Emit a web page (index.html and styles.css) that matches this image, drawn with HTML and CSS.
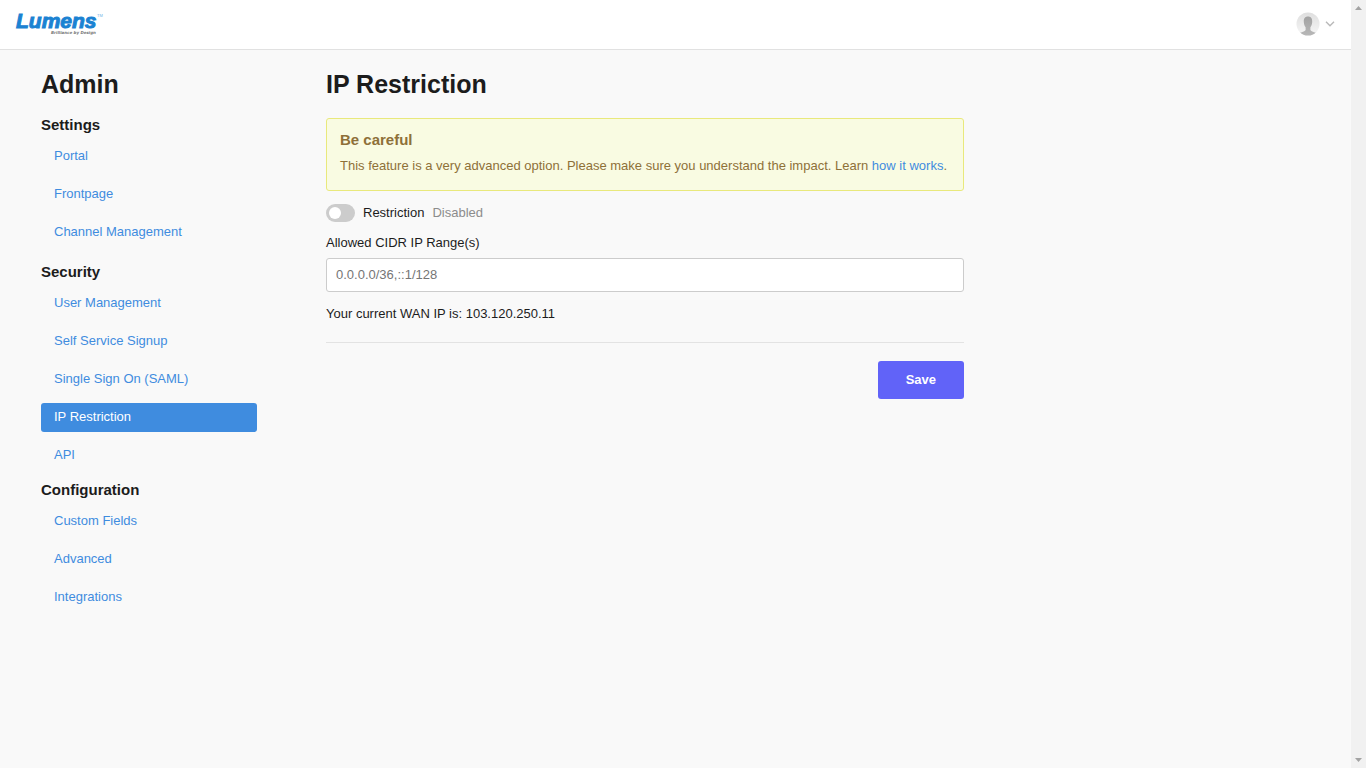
FILE: index.html
```html
<!DOCTYPE html>
<html lang="en">
<head>
<meta charset="utf-8">
<meta name="viewport" content="width=device-width, initial-scale=1">
<title>IP Restriction</title>
<link rel="stylesheet" href="styles.css">
</head>
<body>
<div class="page">
  <header class="topbar">
    <a class="logo" href="#" aria-label="Lumens">
      <svg class="logo-art" width="96" height="36" viewBox="0 0 96 36">
        <text class="logo-name" x="2" y="22">Lumens</text>
        <text class="logo-mark" x="83" y="11">TM</text>
        <text class="logo-tag" x="37" y="28">Brilliance by Design</text>
      </svg>
    </a>
    <button class="account" type="button" aria-label="Account menu">
      <svg class="avatar" width="24" height="24" viewBox="0 0 24 24">
        <defs>
          <linearGradient id="back" x1="0" y1="0" x2="0" y2="1"><stop offset="0" stop-color="#dedede"/><stop offset="1" stop-color="#f7f7f7"/></linearGradient>
          <linearGradient id="person" x1="0" y1="0" x2="0" y2="1"><stop offset="0" stop-color="#a2a2a2"/><stop offset="1" stop-color="#b8b8b8"/></linearGradient>
          <clipPath id="round"><circle cx="12" cy="12" r="11.5"/></clipPath>
        </defs>
        <g clip-path="url(#round)">
          <rect width="24" height="24" fill="url(#back)"/>
          <path fill="url(#person)" d="M12 4.6C8.9 4.6 7.6 6.8 7.8 10C7.9 12.3 8.6 14 9.6 15.2V18C8.8 19.6 5.5 19.8 3 21.8V24H21V21.6C18.5 19.8 15.2 19.8 14.4 18V15.2C15.4 14 16.1 12.3 16.2 10C16.4 6.8 15.1 4.6 12 4.6Z"/>
        </g>
      </svg>
      <svg class="chevron" width="10" height="6" viewBox="0 0 10 6"><path d="M1 .8L5 4.8L9 .8" fill="none" stroke="#b9b9b9" stroke-width="1.4"/></svg>
    </button>
  </header>

  <div class="content">
    <nav class="sidebar" aria-label="Admin">
      <h1 class="title">Admin</h1>
      <section class="group">
        <h2 class="group-title">Settings</h2>
        <a class="nav-link" href="#">Portal</a>
        <a class="nav-link" href="#">Frontpage</a>
        <a class="nav-link" href="#">Channel Management</a>
      </section>
      <section class="group group-security">
        <h2 class="group-title">Security</h2>
        <a class="nav-link" href="#">User Management</a>
        <a class="nav-link" href="#">Self Service Signup</a>
        <a class="nav-link" href="#">Single Sign On (SAML)</a>
        <a class="nav-link active" href="#" aria-current="page">IP Restriction</a>
        <a class="nav-link" href="#">API</a>
      </section>
      <section class="group">
        <h2 class="group-title">Configuration</h2>
        <a class="nav-link" href="#">Custom Fields</a>
        <a class="nav-link" href="#">Advanced</a>
        <a class="nav-link" href="#">Integrations</a>
      </section>
    </nav>

    <main class="main">
      <h1 class="title">IP Restriction</h1>
      <div class="notice">
        <h2 class="notice-title">Be careful</h2>
        <p class="notice-text">This feature is a very advanced option. Please make sure you understand the impact. Learn <a class="link" href="#">how it works</a>.</p>
      </div>
      <form class="form">
        <div class="switch-row">
          <input class="switch" type="checkbox" role="switch" id="restriction">
          <label for="restriction">Restriction</label>
          <span class="state">Disabled</span>
        </div>
        <label class="field-label" for="ranges">Allowed CIDR IP Range(s)</label>
        <input class="field" type="text" id="ranges" placeholder="0.0.0.0/36,::1/128">
        <p class="wan">Your current WAN IP is: 103.120.250.11</p>
        <div class="actions"><button class="save" type="button">Save</button></div>
      </form>
    </main>
  </div>
</div>
<div class="scrollbar" aria-hidden="true">
  <svg width="7" height="4" viewBox="0 0 7 4"><path d="M0 4L3.5 0L7 4Z"/></svg>
  <svg width="7" height="4" viewBox="0 0 7 4"><path d="M0 0L3.5 4L7 0Z"/></svg>
</div>
</body>
</html>
```
FILE: styles.css
```css
* {
  box-sizing: border-box;
}

body {
  display: grid;
  grid-template-columns: minmax(0, 1fr) 15px;
  min-height: 100vh;
  margin: 0;
  background: #f9f9f9;
  color: #1c1c1c;
  font: 13px/18px "Liberation Sans", Arial, sans-serif;
}

h1, h2, p {
  margin: 0;
}

a {
  color: #3f8cdf;
  text-decoration: none;
}

.topbar {
  display: flex;
  align-items: center;
  justify-content: space-between;
  height: 50px;
  padding: 0 16px 1px 14px;
  border-bottom: 1px solid #e1e1e1;
  background: #fff;
}

.logo-art {
  display: block;
  overflow: visible;
}

.logo-name {
  fill: #1b82d2;
  stroke: #1b82d2;
  stroke-width: 1px;
  font-size: 21px;
  font-style: italic;
  font-weight: bold;
}

.logo-mark {
  fill: #6fb2e4;
  font-size: 4px;
}

.logo-tag {
  fill: #777;
  font-family: "DejaVu Sans", sans-serif;
  font-size: 4px;
  font-style: italic;
  font-weight: bold;
}

.account {
  display: flex;
  align-items: center;
  gap: 5px;
  padding: 0;
  border: 0;
  background: none;
}

.content {
  display: flex;
  gap: 69px;
  padding: 16px 41px;
}

.sidebar {
  flex: 0 0 216px;
}

.title {
  margin-bottom: 16px;
  font-size: 25px;
  line-height: 36px;
}

.sidebar .title {
  margin-bottom: 14px;
}

.group {
  margin-bottom: 16px;
}

.group-security {
  margin-bottom: 11px;
}

.group-title, .notice-title {
  margin-bottom: 8px;
  font-size: 15px;
  line-height: 18px;
}

.nav-link {
  display: block;
  margin-bottom: 9px;
  padding: 5px 13px 6px;
  border-radius: 3px;
}

.active {
  background: #3f8cdf;
  color: #fff;
}

.main {
  flex: 1;
  max-width: 638px;
}

.notice {
  padding: 12px 13px 15px;
  border: 1px solid #e9e97c;
  border-radius: 3px;
  background: #f9fbe2;
  color: #8e7038;
}

.switch-row {
  display: flex;
  align-items: center;
  gap: 8px;
  margin: 13px 0 12px;
}

.switch {
  width: 29px;
  height: 18px;
  margin: 0;
  padding: 3px;
  border-radius: 9px;
  background: #ccc;
  appearance: none;
}

.switch::before {
  display: block;
  width: 12px;
  height: 12px;
  border-radius: 50%;
  background: #fff;
  content: "";
}

.switch:checked {
  padding-left: 14px;
  background: #3f8cdf;
}

.state {
  color: #8c8c8c;
}

.field-label {
  display: block;
  margin-bottom: 6px;
}

.field {
  display: block;
  width: 100%;
  height: 34px;
  padding: 0 9px 1px;
  border: 1px solid #ccc;
  border-radius: 3px;
  background: #fff;
  font: inherit;
}

.field::placeholder {
  color: #757575;
}

.wan {
  margin: 13px 0 19px;
}

.actions {
  display: flex;
  justify-content: flex-end;
  padding-top: 18px;
  border-top: 1px solid #e3e3e3;
}

.save {
  padding: 10px 28px;
  border: 0;
  border-radius: 3px;
  background: #6163f8;
  color: #fff;
  font: inherit;
  font-weight: bold;
}

.scrollbar {
  display: flex;
  flex-direction: column;
  align-items: center;
  justify-content: space-between;
  padding: 6px 0;
  background: #f1f1f1;
  fill: #a3a3a3;
}
```
